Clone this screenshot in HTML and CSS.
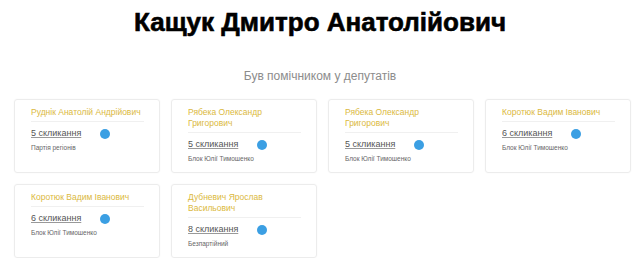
FILE: index.html
```html
<!DOCTYPE html>
<html lang="uk">
<head>
    <meta charset="UTF-8">
    <meta name="viewport" content="width=device-width, initial-scale=1.0">
    <title>Кащук Дмитро Анатолійович</title>
    <link rel="stylesheet" href="styles.css">
</head>
<body>
    <h1 class="person-title">Кащук Дмитро Анатолійович</h1>
    <h2 class="section-title">Був помічником у депутатів</h2>

    <div class="deputies">
        <div class="card">
            <div class="card-name">Руднік Анатолій Андрійович</div>
            <div class="card-term"><a href="#">5 скликання</a><span class="dot"></span></div>
            <div class="card-party">Партія регіонів</div>
        </div>
        <div class="card">
            <div class="card-name">Рябека Олександр Григорович</div>
            <div class="card-term"><a href="#">5 скликання</a><span class="dot"></span></div>
            <div class="card-party">Блок Юлії Тимошенко</div>
        </div>
        <div class="card">
            <div class="card-name">Рябека Олександр Григорович</div>
            <div class="card-term"><a href="#">5 скликання</a><span class="dot"></span></div>
            <div class="card-party">Блок Юлії Тимошенко</div>
        </div>
        <div class="card">
            <div class="card-name">Коротюк Вадим Іванович</div>
            <div class="card-term"><a href="#">6 скликання</a><span class="dot"></span></div>
            <div class="card-party">Блок Юлії Тимошенко</div>
        </div>
        <div class="card">
            <div class="card-name">Коротюк Вадим Іванович</div>
            <div class="card-term"><a href="#">6 скликання</a><span class="dot"></span></div>
            <div class="card-party">Блок Юлії Тимошенко</div>
        </div>
        <div class="card">
            <div class="card-name">Дубневич Ярослав Васильович</div>
            <div class="card-term"><a href="#">8 скликання</a><span class="dot"></span></div>
            <div class="card-party">Безпартійний</div>
        </div>
    </div>
</body>
</html>
```
FILE: styles.css
```css
/* сторінка помічника */
body {
    margin: 0;
    font-family: "Liberation Sans", Arial, sans-serif;
    background: #fff;
}
.person-title {
    margin: 8px 0 0;
    font-size: 26px;
    line-height: 28px;
    font-weight: bold;
    color: #000;
    text-align: center;
    -webkit-text-stroke: 0.6px #000;
}
.section-title {
    margin: 33px 0 0;
    font-size: 12px;
    line-height: 14px;
    font-weight: normal;
    color: #8c8c8c;
    text-align: center;
}
.deputies {
    display: grid;
    grid-template-columns: repeat(4, 146px);
    gap: 11px;
    padding: 16px 0 0 14px;
}
.card {
    border: 1px solid #ececec;
    border-radius: 3px;
    padding: 7px 15px 9px 16px;
    box-shadow: 0 0 2px rgba(0, 0, 0, 0.04);
}
.card-name {
    font-size: 8.5px;
    line-height: 11px;
    color: #dbb940;
    padding-bottom: 3px;
    border-bottom: 1px solid #f0f0f0;
}
.card-term {
    display: flex;
    align-items: center;
    margin-top: 4px;
    height: 13px;
}
.card-term a {
    width: 69px;
    font-size: 9px;
    color: #555;
    text-decoration: underline;
    text-decoration-color: #999;
}
.dot {
    width: 10px;
    height: 10px;
    margin-top: 2px;
    border-radius: 50%;
    background: #3b9fe3;
}
.card-party {
    margin-top: 5px;
    font-size: 6.5px;
    line-height: 8px;
    color: #666;
}
```
